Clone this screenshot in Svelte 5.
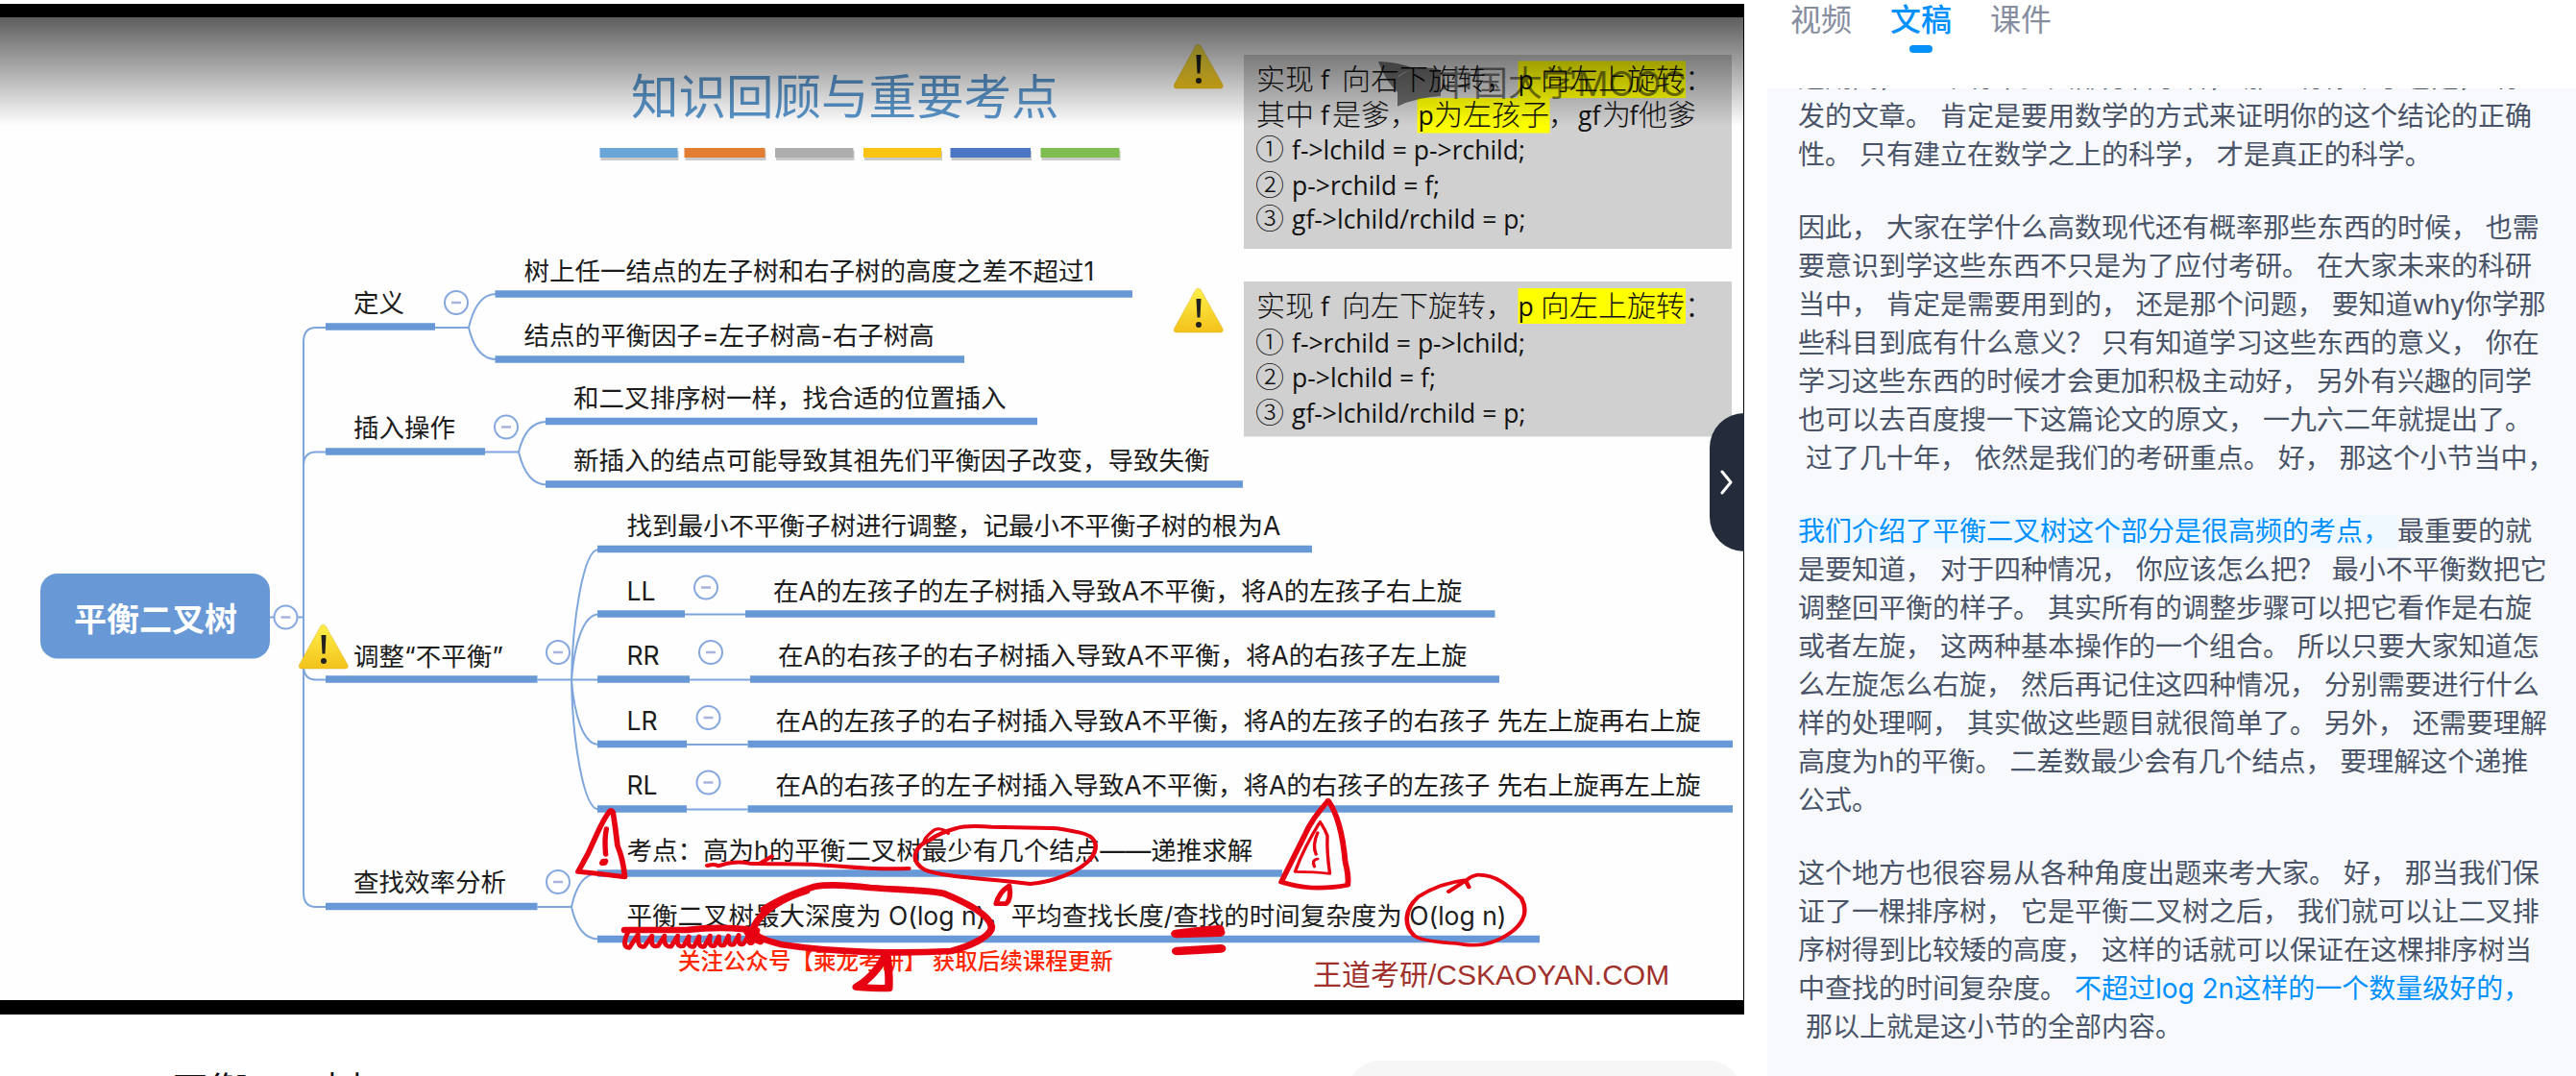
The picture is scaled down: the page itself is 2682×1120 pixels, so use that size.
<script>
  // The slide canvas uses two units per slide pixel.
  const bars = [
    { x: 1249, w: 162, c: '#6aa5d8' },
    { x: 1425, w: 168, c: '#e27d31' },
    { x: 1614, w: 163, c: '#adadad' },
    { x: 1798, w: 162, c: '#fbc410' },
    { x: 1979, w: 167, c: '#4c76c3' },
    { x: 2167, w: 164, c: '#7fbd50' }
  ];

  const rules = [
    [678, 906, 680], [1031, 2358, 612], [1031, 2008, 748],
    [678, 1010, 940], [1136, 2160, 877], [1136, 2588, 1008],
    [678, 1119, 1414], [1244, 2732, 1143],
    [1244, 1426, 1278], [1552, 3113, 1278],
    [1244, 1436, 1414], [1562, 3122, 1414],
    [1244, 1430, 1549], [1557, 3608, 1549],
    [1244, 1430, 1684], [1557, 3608, 1684],
    [678, 1119, 1887], [1244, 2670, 1818], [1244, 3206, 1955]
  ];

  const toggles = [
    [595, 1285], [950, 630], [1054, 889], [1162, 1358],
    [1470, 1223], [1480, 1358], [1475, 1494], [1475, 1629], [1162, 1836]
  ];

  const labels = [
    { x: 736, y: 650, t: '定义' },
    { x: 1091, y: 584, t: '树上任一结点的左子树和右子树的高度之差不超过1' },
    { x: 1091, y: 718, t: '结点的平衡因子=左子树高-右子树高' },
    { x: 736, y: 909, t: '插入操作' },
    { x: 1194, y: 847, t: '和二叉排序树一样，找合适的位置插入' },
    { x: 1194, y: 978, t: '新插入的结点可能导致其祖先们平衡因子改变，导致失衡' },
    { x: 736, y: 1385, t: '调整“不平衡”' },
    { x: 1305, y: 1114, t: '找到最小不平衡子树进行调整，记最小不平衡子树的根为A' },
    { x: 1305, y: 1249, t: 'LL' },
    { x: 1610, y: 1249, t: '在A的左孩子的左子树插入导致A不平衡，将A的左孩子右上旋' },
    { x: 1305, y: 1383, t: 'RR' },
    { x: 1620, y: 1383, t: '在A的右孩子的右子树插入导致A不平衡，将A的右孩子左上旋' },
    { x: 1305, y: 1519, t: 'LR' },
    { x: 1615, y: 1519, t: '在A的左孩子的右子树插入导致A不平衡，将A的左孩子的右孩子 先左上旋再右上旋' },
    { x: 1305, y: 1654, t: 'RL' },
    { x: 1615, y: 1654, t: '在A的右孩子的左子树插入导致A不平衡，将A的右孩子的左孩子 先右上旋再左上旋' },
    { x: 736, y: 1856, t: '查找效率分析' },
    { x: 1305, y: 1790, t: '考点：高为h的平衡二叉树最少有几个结点——递推求解' },
    { x: 1305, y: 1926, t: '平衡二叉树最大深度为 O(log n)，平均查找长度/查找的时间复杂度为 O(log n)' }
  ];

  const warnings = [[2444, 92], [2444, 600], [622, 1300]];

  const steps = [
    { y: 332, n: '①', t: 'f->lchild = p->rchild;' },
    { y: 406, n: '②', t: 'p->rchild = f;' },
    { y: 476, n: '③', t: 'gf->lchild/rchild = p;' },
    { y: 734, n: '①', t: 'f->rchild = p->lchild;' },
    { y: 806, n: '②', t: 'p->lchild = f;' },
    { y: 880, n: '③', t: 'gf->lchild/rchild = p;' }
  ];

  const tabs = ['视频', '文稿', '课件'];
  let active = $state('文稿');

  const transcript = [
    [{ t: '这期间， 上个有不少大部分科学者， 那么有你个了也是， 有\n发的文章。 肯定是要用数学的方式来证明你的这个结论的正确\n性。 只有建立在数学之上的科学， 才是真正的科学。' }],
    [{ t: '因此， 大家在学什么高数现代还有概率那些东西的时候， 也需\n要意识到学这些东西不只是为了应付考研。 在大家未来的科研\n当中， 肯定是需要用到的， 还是那个问题， 要知道why你学那\n些科目到底有什么意义？ 只有知道学习这些东西的意义， 你在\n学习这些东西的时候才会更加积极主动好， 另外有兴趣的同学\n也可以去百度搜一下这篇论文的原文， 一九六二年就提出了。\n 过了几十年， 依然是我们的考研重点。 好， 那这个小节当中，' }],
    [
      { t: '我们介绍了平衡二叉树这个部分是很高频的考点， ', k: 'now' },
      { t: '最重要的就\n是要知道， 对于四种情况， 你应该怎么把？ 最小不平衡数把它\n调整回平衡的样子。 其实所有的调整步骤可以把它看作是右旋\n或者左旋， 这两种基本操作的一个组合。 所以只要大家知道怎\n么左旋怎么右旋， 然后再记住这四种情况， 分别需要进行什么\n样的处理啊， 其实做这些题目就很简单了。 另外， 还需要理解\n高度为h的平衡。 二差数最少会有几个结点， 要理解这个递推\n公式。' }
    ],
    [
      { t: '这个地方也很容易从各种角度出题来考大家。 好， 那当我们保\n证了一棵排序树， 它是平衡二叉树之后， 我们就可以让二叉排\n序树得到比较矮的高度， 这样的话就可以保证在这棵排序树当\n中查找的时间复杂度。 ' },
      { t: '不超过log 2n这样的一个数量级好的，', k: 'hover' },
      { t: '\n 那以上就是这小节的全部内容。' }
    ]
  ];
</script>

<div class="page">
  <main class="main">
    <div class="video">
      <svg class="slide" viewBox="0 36 3630 2046" role="img" aria-label="知识回顾与重要考点">
        <defs>
          <linearGradient id="shade" x1="0" y1="0" x2="0" y2="1">
            <stop offset="0" stop-color="#000" stop-opacity="0.63" />
            <stop offset="1" stop-color="#000" stop-opacity="0" />
          </linearGradient>
          <linearGradient id="sign" x1="0" y1="0" x2="0" y2="1">
            <stop offset="0" stop-color="#fff04a" />
            <stop offset="1" stop-color="#f2c21a" />
          </linearGradient>
        </defs>
        <rect x="0" y="36" width="3630" height="2046" fill="#fefefe" />

        <text class="title" x="1314" y="237">知识回顾与重要考点</text>
        {#each bars as b}
          <rect x={b.x + 2} y="314" width={b.w} height="20" fill="#c9c9c9" />
          <rect x={b.x} y="308" width={b.w} height="20" fill={b.c} />
        {/each}

        <!-- Rotation notes -->
        <rect x="2590" y="114" width="1016" height="404" fill="#d0d0d0" />
        <rect x="2590" y="586" width="1016" height="323" fill="#d0d0d0" />
        <rect x="3161" y="127" width="349" height="77" fill="#ff0" />
        <rect x="2951" y="204" width="276" height="73" fill="#ff0" />
        <rect x="3161" y="600" width="349" height="74" fill="#ff0" />
        <text class="note" y="186"><tspan x="2616">实现</tspan><tspan class="latin" x="2750">f</tspan><tspan x="2794">向右下旋转，</tspan><tspan class="latin" x="3161">p</tspan><tspan x="3208">向左上旋转</tspan><tspan x="3508">：</tspan></text>
        <text class="note" y="260"><tspan x="2616">其中</tspan><tspan class="latin" x="2750">f</tspan><tspan x="2774">是爹，</tspan><tspan class="latin" x="2953">p</tspan><tspan x="2986">为左孩子</tspan><tspan x="3224">，</tspan><tspan class="latin" x="3286">gf</tspan><tspan x="3336">为</tspan><tspan class="latin" x="3393">f</tspan><tspan x="3412">他爹</tspan></text>
        <text class="note" y="658"><tspan x="2616">实现</tspan><tspan class="latin" x="2750">f</tspan><tspan x="2794">向左下旋转，</tspan><tspan class="latin" x="3161">p</tspan><tspan x="3208">向左上旋转</tspan><tspan x="3508">：</tspan></text>
        {#each steps as s}
          <text class="note" y={s.y}><tspan x="2614">{s.n}</tspan><tspan class="latin" x="2690">{s.t}</tspan></text>
        {/each}

        <!-- Mind map -->
        <g class="wire">
          <path d="M560 1285H632M632 1285V712Q632 682 658 682H680M632 1000V970Q632 941 658 941H680M632 1285V1385Q632 1415 658 1415H680M632 1385V1858Q632 1888 658 1888H680" />
          <path d="M906 682H976C984 648 1000 612 1033 612M976 682C984 716 1000 748 1033 748" />
          <path d="M1010 941H1080C1088 908 1104 878 1138 878M1080 941C1088 974 1104 1009 1138 1009" />
          <path d="M1119 1415H1246M1190 1415C1192 1290 1215 1144 1246 1144M1190 1415C1196 1340 1215 1279 1246 1279M1190 1415C1196 1490 1215 1550 1246 1550M1190 1415C1192 1540 1215 1685 1246 1685" />
          <path d="M1426 1279H1552M1436 1415H1562M1430 1550H1557M1430 1685H1557" />
          <path d="M1119 1888H1190C1198 1850 1214 1818 1246 1818M1190 1888C1198 1924 1214 1955 1246 1955" />
        </g>
        {#each rules as [a, b, y]}
          <path class="rule" d="M{a} {y}H{b}" />
        {/each}
        {#each toggles as [x, y]}
          <circle class="knob" cx={x} cy={y} r="24" />
          <path class="dash" d="M{x - 10} {y}h20" />
        {/each}
        <rect x="84" y="1194" width="478" height="177" rx="36" fill="#6899d6" />
        <text class="root" x="154" y="1314">平衡二叉树</text>
        {#each labels as l}
          <text class="node" x={l.x} y={l.y}>{l.t}</text>
        {/each}
        {#each warnings as [x, y]}
          <g transform="translate({x} {y})">
            <path d="M46 3Q51-2 56 3L102 84Q104 92 97 92H5Q-1 92 1 84Z" fill="url(#sign)" stroke="#dfb120" stroke-width="1" />
            <path d="M47 22h10l-2 39h-6z" fill="#222" />
            <circle cx="52" cy="76" r="6" fill="#222" />
          </g>
        {/each}

        <text class="follow" x="1412" y="2018">关注公众号【乘龙考研】 获取后续课程更新</text>
        <text class="brand" x="2734" y="2049">王道考研/CSKAOYAN.COM</text>

        <!-- Pen strokes -->
        <g class="pen" transform="translate(1200 1640) scale(0.7654 0.6667)">
          <path stroke-width="15" d="M92 72C70 100 55 150 32 205L5 262Q60 268 100 274L132 278Q128 225 112 180Q106 120 100 78Q96 68 92 72" />
          <path stroke-width="14" d="M82 128Q76 160 80 208M70 236L80 228" />
          <circle cx="75" cy="232" r="7" />
          <path stroke-width="12" d="M356 243Q378 236 386 244Q430 226 470 236L525 238Q620 236 720 245Q820 255 905 252M500 236L532 214" />
          <path stroke-width="12" d="M968 160C918 180 905 228 948 256C1000 280 1110 282 1235 300C1290 295 1370 265 1402 218C1425 175 1410 150 1370 140Q1310 124 1290 126L1130 122Q1060 116 1035 126Q990 140 962 162" />
          <path stroke-width="9" d="M1012 142Q985 116 965 140Q948 156 946 168" />
          <path stroke-width="14" d="M1178 306Q1150 325 1142 362H1170Q1184 348 1178 306" />
          <path stroke-width="20" d="M626 322C560 345 505 385 485 430C475 460 500 472 560 490C700 515 880 518 1020 510C1080 492 1130 460 1130 435C1125 400 1075 365 1000 330C950 318 860 318 800 312C740 304 690 300 650 308Q560 340 510 380" />
          <path stroke-width="20" d="M132 444H300Q400 430 490 446M500 480Q475 470 465 450" />
          <path stroke-width="13" d="M140 452Q122 498 144 500L168 458Q165 500 185 496L206 462Q200 500 222 494L240 462Q236 498 258 496L276 462Q270 500 292 494L306 464Q300 500 320 496L334 464Q330 500 348 496L364 462Q358 498 376 494L388 464Q386 498 402 492L414 462Q412 496 428 490L442 460Q438 494 454 488L470 460Q466 492 478 484" />
          <path stroke-width="22" d="M838 530Q810 590 762 622Q800 626 850 626Q852 580 846 530" />
        </g>
        <g class="pen" transform="translate(2360 1640) scale(0.8418 0.6667)">
          <path stroke-width="14" d="M482 40Q440 100 425 145L366 294Q400 308 440 312Q490 314 530 304Q534 280 524 230Q515 100 482 40" />
          <path stroke-width="8" d="M462 106C440 150 415 210 400 262Q450 262 486 268Q478 200 480 150Q474 130 462 106M456 140Q442 180 452 208M456 222Q440 226 448 246" />
          <path stroke-width="11" d="M780 324L822 290L830 310M825 288Q760 296 705 340C670 380 668 430 695 462Q715 480 800 486C850 498 890 490 930 455C970 420 975 380 960 345C930 310 900 270 850 272Q830 278 822 292" />
          <path stroke-width="26" d="M106 456Q150 448 212 442M108 510Q160 506 216 502M110 456L214 452" />
        </g>

        <rect x="0" y="36" width="3630" height="226" fill="url(#shade)" />
        <g class="mark">
          <g transform="translate(2800 80) scale(0.6667)">
            <path d="M165 122Q190 98 235 92Q270 90 300 98V180Q225 184 165 212Z" />
            <path d="M105 72Q170 74 222 96Q180 102 165 122V168Q125 130 105 72Z" />
          </g>
          <text x="2996" y="199">中国大学MOOC</text>
        </g>
      </svg>
      <button class="fold" aria-label="收起侧栏">
        <svg viewBox="0 0 16 26" width="16" height="26" aria-hidden="true"><path d="M3 2L12 13L3 24" /></svg>
      </button>
    </div>
    <div class="info">
      <h1>平衡二叉树</h1>
      <button class="pill" aria-label="更多操作"></button>
    </div>
  </main>

  <aside class="side">
    <div class="tabs" role="tablist">
      {#each tabs as t}
        <button class="tab" class:on={active === t} role="tab" aria-selected={active === t} onclick={() => (active = t)}>{t}</button>
      {/each}
    </div>
    <div class="panel">
      <div class="script">
        {#each transcript as para}
          <p>{#each para as s}<span class={s.k}>{s.t}</span>{/each}</p>
        {/each}
      </div>
    </div>
  </aside>
</div>

<style>
  :global(body) {
    margin: 0;
    background: #fff;
  }
  .page {
    display: grid;
    grid-template-columns: minmax(0, 1fr) 866px;
    height: 100vh;
    overflow: hidden;
    font-family: Inter, 'Noto Sans CJK SC', sans-serif;
  }
  button {
    border: 0;
    padding: 0;
    background: none;
    font: inherit;
    cursor: pointer;
  }
  .main {
    padding-top: 4px;
    min-width: 0;
  }
  .video {
    position: relative;
    padding: 14px 1px 15px 0;
    background: #000;
  }
  .slide {
    display: block;
    width: 100%;
    height: auto;
    font-family: Inter, 'Noto Sans CJK SC', sans-serif;
  }
  .title {
    font-size: 99px;
    font-weight: 400;
    fill: #5a96cc;
  }
  .node {
    font-size: 53px;
    fill: #1c1c1c;
    white-space: pre;
  }
  .root {
    font-size: 68px;
    font-weight: 700;
    fill: #fff;
  }
  .note {
    font-family: 'Noto Sans CJK SC', sans-serif;
    font-size: 60px;
    font-weight: 300;
    fill: #111;
  }
  .latin {
    font-family: 'Open Sans', sans-serif;
    font-size: 53px;
    font-weight: 400;
  }
  .follow {
    font-size: 47px;
    font-weight: 500;
    fill: #ff2600;
  }
  .brand {
    font-family: 'Liberation Sans', 'Noto Sans CJK SC', sans-serif;
    font-size: 60px;
    fill: #a0302c;
  }
  .wire {
    fill: none;
    stroke: #7fa6dc;
    stroke-width: 4;
  }
  .rule {
    stroke: #6899d6;
    stroke-width: 15;
  }
  .knob {
    fill: #fff;
    stroke: #86a8de;
    stroke-width: 4;
  }
  .dash {
    stroke: #a9b3dc;
    stroke-width: 5;
  }
  .pen {
    fill: none;
    stroke: #e60012;
    stroke-linecap: round;
    stroke-linejoin: round;
  }
  .pen circle {
    fill: #e60012;
    stroke-width: 8;
  }
  .mark {
    fill: #000;
    fill-opacity: 0.5;
    font-size: 72px;
  }
  .fold {
    position: absolute;
    right: 0;
    top: 426px;
    width: 36px;
    height: 144px;
    display: flex;
    align-items: center;
    justify-content: center;
    border-radius: 36px 0 0 36px;
    background: #242b3a;
  }
  .fold path {
    fill: none;
    stroke: #fff;
    stroke-width: 3;
    stroke-linecap: round;
    stroke-linejoin: round;
  }
  .info {
    display: flex;
    justify-content: space-between;
    align-items: flex-start;
    padding: 48px 4px 0 178px;
  }
  h1 {
    margin: 0;
    font-size: 40px;
    line-height: 64px;
    font-weight: 400;
    color: #111;
  }
  .pill {
    width: 408px;
    height: 64px;
    border-radius: 32px;
    background: #f6f6f6;
  }
  .side {
    display: flex;
    flex-direction: column;
    min-height: 0;
    padding-left: 24px;
  }
  .tabs {
    display: flex;
    flex: none;
    gap: 40px;
    height: 92px;
    padding-left: 24px;
  }
  .tab {
    display: flex;
    flex-direction: column;
    align-items: center;
    gap: 5px;
    font-size: 32px;
    line-height: 42px;
    color: #858d9e;
  }
  .tab.on {
    color: #0091ff;
    font-weight: 500;
  }
  .tab.on::after {
    content: '';
    width: 24px;
    height: 8px;
    border-radius: 4px;
    background: #0091ff;
  }
  .panel {
    flex: 1;
    min-height: 0;
    overflow: hidden;
    padding: 0 16px 0 32px;
    background: #f7f9fd;
  }
  .script {
    margin-top: -31px;
    font-size: 28px;
    line-height: 40px;
    color: #4a5468;
  }
  p {
    margin: 0 0 36px;
    white-space: pre-wrap;
  }
  .now {
    color: #0091ff;
    background: #f0f9ff;
  }
  .hover {
    color: #0091ff;
  }
</style>
